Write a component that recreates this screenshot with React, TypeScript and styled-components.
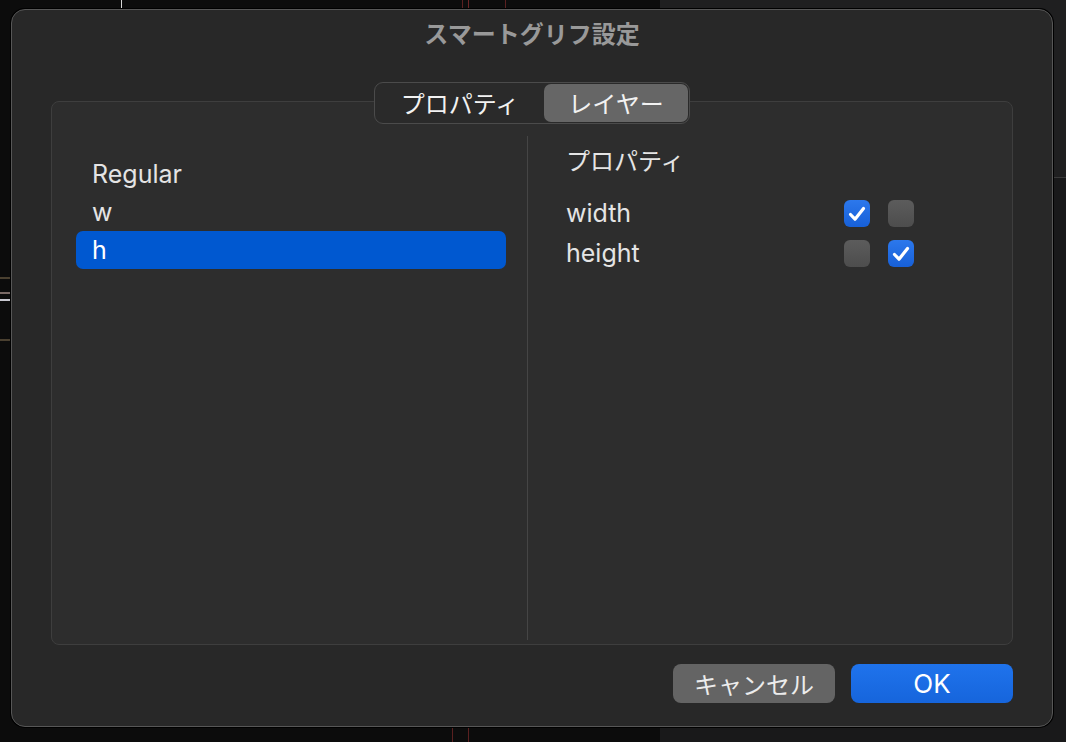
import styled, { createGlobalStyle } from "styled-components";

const GlobalStyle = createGlobalStyle`
  html, body {
    margin: 0;
    padding: 0;
    background: #0c0c0c;
  }
  body {
    font-family: "Inter", "Noto Sans CJK JP", sans-serif;
    -webkit-font-smoothing: antialiased;
  }
`;

const Screen = styled.div`
  position: relative;
  width: 1066px;
  height: 742px;
  overflow: hidden;
  display: flex;
`;

const CanvasArea = styled.div`
  position: relative;
  width: 660px;
  background: #0c0c0c;
`;

const SidePane = styled.div`
  flex: 1;
  display: flex;
  flex-direction: column;
  background: #19191a;
`;

const SidePaneHeader = styled.div`
  height: 177px;
  background: #1f1f20;
  border-bottom: 1px solid #3a3a3a;
`;

// guide lines of the glyph canvas behind the sheet
const Guide = styled.div<{ $x: number; $y: number; $w: number; $h: number; $c: string }>`
  position: absolute;
  left: ${(p) => p.$x}px;
  top: ${(p) => p.$y}px;
  width: ${(p) => p.$w}px;
  height: ${(p) => p.$h}px;
  background: ${(p) => p.$c};
`;

const Sheet = styled.div`
  position: absolute;
  left: 11px;
  top: 9px;
  width: 1042px;
  height: 718px;
  box-sizing: border-box;
  background: #282828;
  border: 1px solid #575757;
  border-radius: 14px;
  box-shadow: 0 0 0 1px #000;
  display: flex;
  flex-direction: column;
  padding: 0 39px 23px;
`;

const Title = styled.div`
  height: 52px;
  padding-top: 10px;
  text-align: center;
  font-size: 24px;
  font-weight: 700;
  color: #999999;
  line-height: 30px;
  box-sizing: border-box;
`;

const TabRow = styled.div`
  margin-top: 20px;
  display: flex;
  justify-content: center;
  position: relative;
  z-index: 1;
  margin-bottom: -23px;
`;

const Segmented = styled.div`
  display: flex;
  height: 42px;
  box-sizing: border-box;
  border: 1px solid #4b4b4b;
  border-radius: 9px;
  background: #2a2a2a;
  padding: 1px;
`;

const Segment = styled.div<{ $active?: boolean }>`
  width: ${(p) => (p.$active ? 144 : 168)}px;
  display: flex;
  align-items: center;
  justify-content: center;
  font-size: 24px;
  color: #f2f2f2;
  border-radius: 7px;
  background: ${(p) => (p.$active ? "#666666" : "transparent")};
`;

const Panel = styled.div`
  height: 545px;
  box-sizing: border-box;
  background: #2d2d2d;
  border: 1px solid #3e3e3e;
  border-radius: 8px;
  display: flex;
  padding: 34px 0 4px;
`;

const LayerColumn = styled.div`
  width: 476px;
  box-sizing: border-box;
  padding: 19px 21px 0 24px;
  border-right: 1px solid #454545;
`;

const LayerRow = styled.div<{ $selected?: boolean }>`
  height: 38px;
  display: flex;
  align-items: center;
  padding-left: 16px;
  border-radius: 7px;
  font-size: 25px;
  color: ${(p) => (p.$selected ? "#ffffff" : "#e4e4e4")};
  background: ${(p) => (p.$selected ? "#0058d0" : "transparent")};
`;

const PropColumn = styled.div`
  flex: 1;
  padding: 10px 0 0 38px;
`;

const PropHeading = styled.div`
  font-size: 24px;
  color: #e4e4e4;
  height: 32px;
  line-height: 32px;
  margin-bottom: 15px;
`;

const PropRow = styled.div`
  display: grid;
  grid-template-columns: 260px 26px 26px;
  column-gap: 18px;
  align-items: center;
  height: 40px;
`;

const PropLabel = styled.div`
  font-size: 25px;
  color: #e4e4e4;
`;

const CheckBox = styled.div<{ $checked?: boolean }>`
  width: 26px;
  height: 27px;
  margin-top: 2px;
  border-radius: 6px;
  display: flex;
  align-items: center;
  justify-content: center;
  background: ${(p) =>
    p.$checked
      ? "linear-gradient(#2c78ec, #1760d8)"
      : "linear-gradient(#5c5c5c, #4d4d4d)"};
`;

const Footer = styled.div`
  margin-top: 19px;
  display: flex;
  justify-content: flex-end;
  gap: 16px;
`;

const Button = styled.button<{ $primary?: boolean }>`
  width: 162px;
  height: 39px;
  border: none;
  border-radius: 8px;
  font-family: inherit;
  font-size: ${(p) => (p.$primary ? 26 : 24)}px;
  color: ${(p) => (p.$primary ? "#ffffff" : "#ececec")};
  background: ${(p) =>
    p.$primary ? "linear-gradient(#1f73ec, #1665dc)" : "#646464"};
  display: flex;
  align-items: center;
  justify-content: center;
  padding: 0;
`;

function Check({ on }: { on: boolean }) {
  return (
    <CheckBox $checked={on}>
      {on && (
        <svg width="22" height="22" viewBox="0 0 22 22">
          <path
            d="M4.5 11.5 L9 16.2 L17.5 5.5"
            fill="none"
            stroke="#ffffff"
            strokeWidth="3.2"
            strokeLinecap="round"
            strokeLinejoin="round"
          />
        </svg>
      )}
    </CheckBox>
  );
}

const layers = ["Regular", "w", "h"];
const props = [
  { name: "width", checks: [true, false] },
  { name: "height", checks: [false, true] },
];

export default function App() {
  return (
    <>
      <GlobalStyle />
      <Screen>
        <CanvasArea>
          <Guide $x={121} $y={0} $w={1} $h={8} $c="#d8d8d8" />
          <Guide $x={462} $y={0} $w={1} $h={8} $c="#5a2020" />
          <Guide $x={468} $y={0} $w={1} $h={8} $c="#6a2424" />
          <Guide $x={505} $y={0} $w={1} $h={8} $c="#5a2020" />
          <Guide $x={452} $y={728} $w={1} $h={14} $c="#5a2020" />
          <Guide $x={468} $y={728} $w={1} $h={14} $c="#5a2020" />
          <Guide $x={0} $y={277} $w={10} $h={2} $c="#4a4030" />
          <Guide $x={0} $y={292} $w={10} $h={2} $c="#7a6a66" />
          <Guide $x={0} $y={299} $w={10} $h={2} $c="#c8c8d0" />
          <Guide $x={0} $y={339} $w={10} $h={2} $c="#4a4030" />
        </CanvasArea>
        <SidePane>
          <SidePaneHeader />
        </SidePane>

        <Sheet>
          <Title>スマートグリフ設定</Title>
          <TabRow>
            <Segmented>
              <Segment>プロパティ</Segment>
              <Segment $active>レイヤー</Segment>
            </Segmented>
          </TabRow>
          <Panel>
            <LayerColumn>
              {layers.map((l) => (
                <LayerRow key={l} $selected={l === "h"}>
                  {l}
                </LayerRow>
              ))}
            </LayerColumn>
            <PropColumn>
              <PropHeading>プロパティ</PropHeading>
              {props.map((p) => (
                <PropRow key={p.name}>
                  <PropLabel>{p.name}</PropLabel>
                  {p.checks.map((c, i) => (
                    <Check key={i} on={c} />
                  ))}
                </PropRow>
              ))}
            </PropColumn>
          </Panel>
          <Footer>
            <Button>キャンセル</Button>
            <Button $primary>OK</Button>
          </Footer>
        </Sheet>
      </Screen>
    </>
  );
}
